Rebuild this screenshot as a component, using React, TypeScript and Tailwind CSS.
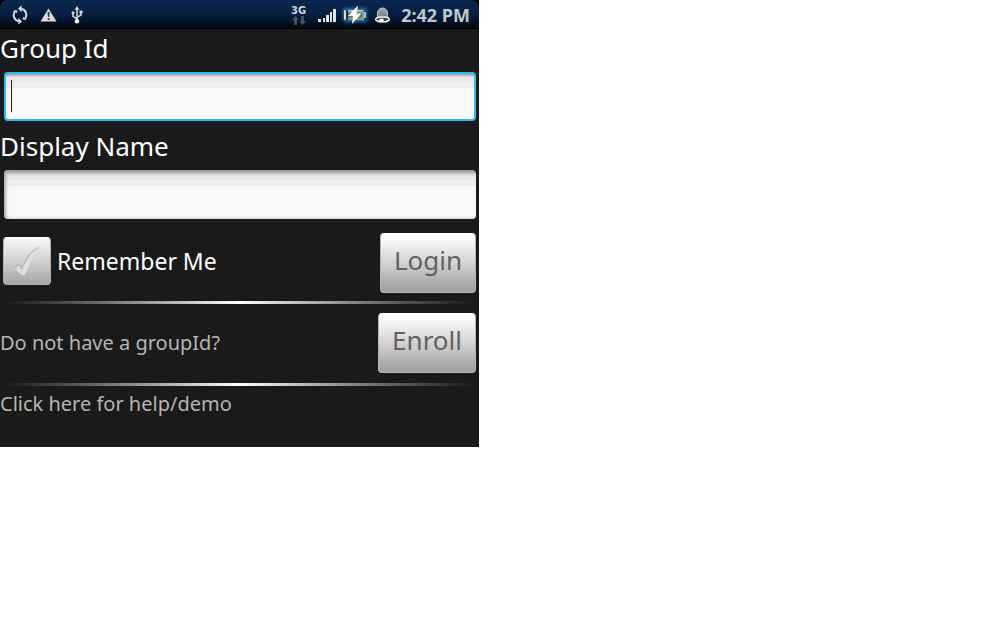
import type { ReactNode } from "react";

function SyncIcon() {
  return (
    <svg width="16" height="20" viewBox="0 0 16 20" fill="none" aria-hidden="true">
      <path d="M6.5 16.2A6.3 6.3 0 0 1 3.2 6" stroke="#d6d8da" strokeWidth="2" />
      <path d="M9.5 3.8A6.3 6.3 0 0 1 12.8 14" stroke="#d6d8da" strokeWidth="2" />
      <path d="M6 3.6 9.6 .6V7z" fill="#e6e7e8" />
      <path d="M10 16.400 6.400 13v6.600z" fill="#e6e7e8" />
      <path d="M1.500 5.200h3.700v3z" fill="#d6d8da" />
      <path d="M14.500 14.800h-3.700v-3z" fill="#d6d8da" />
    </svg>
  );
}

function WarningIcon() {
  return (
    <svg width="17" height="14" viewBox="0 0 17 14" aria-hidden="true">
      <path d="M8.5 .5 16.5 13.5H.5z" fill="#d9dbdc" />
      <path d="M7.6 4h2l-.4 5H8z" fill="#26303d" />
      <rect x="7.6" y="10.2" width="2" height="1.8" fill="#26303d" />
    </svg>
  );
}

function UsbIcon() {
  return (
    <svg width="12" height="18" viewBox="0 0 12 18" fill="none" aria-hidden="true">
      <path d="M6 15V3M6 13 2 10.4V7M6 11.4 10 9V6.5" stroke="#d0d3d6" strokeWidth="1.6" />
      <path d="M6 0 8.4 3.8H3.6z" fill="#d9dbdc" />
      <circle cx="2" cy="6.8" r="1.6" fill="#d0d3d6" />
      <rect x="8.5" y="4.5" width="3" height="3" fill="#d0d3d6" />
      <circle cx="6" cy="15.2" r="2.3" fill="#f0f1f2" />
    </svg>
  );
}

function DataArrows() {
  return (
    <svg width="14" height="9" viewBox="0 0 14 9" fill="#46525f" aria-hidden="true">
      <path d="M3.5 0 7 4H5v5H2V4H0z" />
      <path d="M10.500 9 14 5h-2V0H9v5H7z" />
    </svg>
  );
}

function SignalIcon() {
  return (
    <svg width="18" height="13" viewBox="0 0 18 13" fill="#dfe2e4" aria-hidden="true">
      <rect x="0" y="10" width="3" height="3" />
      <rect x="5" y="9" width="2" height="4" />
      <rect x="8" y="6" width="3" height="7" />
      <rect x="12" y="3" width="2" height="10" />
      <rect x="15" y="0" width="3" height="13" />
    </svg>
  );
}

function BatteryIcon() {
  return (
    <svg width="30" height="22" viewBox="0 0 30 22" aria-hidden="true">
      <defs>
        <filter id="glow" x="-30%" y="-40%" width="160%" height="180%">
          <feGaussianBlur stdDeviation="1.5" />
        </filter>
        <linearGradient id="cell" x1="0" x2="0" y1="0" y2="1">
          <stop offset="0" stopColor="#d9e2e4" />
          <stop offset=".4" stopColor="#3f5558" />
          <stop offset="1" stopColor="#93a6a4" />
        </linearGradient>
      </defs>
      <rect x="3" y="4" width="24" height="14" rx="3" fill="#2472aa" filter="url(#glow)" />
      <rect x="4" y="6" width="22" height="10" rx="2" fill="#14324c" />
      <rect x="4" y="6" width="2" height="10" rx="1" fill="#d4dadb" />
      <rect x="8" y="6" width="14" height="10" fill="url(#cell)" />
      <rect x="22" y="6" width="2" height="10" fill="#8f9f80" />
      <rect x="24" y="8" width="2" height="6" fill="#a9bcc4" />
      <path d="M18 1.500 8 12h5L12 20 21.500 9.500h-5z" fill="#fff" />
    </svg>
  );
}

function BellIcon() {
  return (
    <svg width="17" height="16" viewBox="0 0 17 16" aria-hidden="true">
      <defs>
        <linearGradient id="bell" x1="0" x2="0" y1="0" y2="1">
          <stop offset="0" stopColor="#a2a9b2" />
          <stop offset="1" stopColor="#66727f" />
        </linearGradient>
      </defs>
      <path d="M3.500 11V6a5 5 0 0 1 10 0v5l2 1.500h-14z" fill="url(#bell)" stroke="#c4c9ce" />
      <path d="M2.500 11C5 9.500 12 9.500 14.500 11c2.500 2-1 4-6 4s-8.500-2-6-4z" fill="#27364a" stroke="#f4f5f6" strokeWidth="1.500" />
      <ellipse cx="7.500" cy="13" rx="2.500" ry="1.500" fill="#fff" />
    </svg>
  );
}

function StatusBar() {
  return (
    <header className="bg-black pb-px">
      <div className="flex h-7 items-center rounded-t-lg bg-linear-to-b from-[#0a2650] via-[#071f42] to-[#020912] pt-px pr-[9px] pl-3">
        <div className="flex items-center gap-3">
          <SyncIcon />
          <WarningIcon />
          <span className="pl-0.5">
            <UsbIcon />
          </span>
        </div>
        <div className="ml-auto flex items-center">
          <div className="mr-3 flex flex-col items-center">
            <span className="font-['DejaVu_Sans',sans-serif] text-[10px] leading-[11px] font-bold text-[#d2d5d8]">3G</span>
            <DataArrows />
          </div>
          <span className="mr-1 pt-0.5">
            <SignalIcon />
          </span>
          <BatteryIcon />
          <span className="mr-2.5 ml-1">
            <BellIcon />
          </span>
          <time className="text-[18px] leading-7 font-bold text-[#bfc8cc]">2:42 PM</time>
        </div>
      </div>
    </header>
  );
}

function Divider() {
  return (
    <hr className="mx-1 h-[3px] border-0 bg-linear-to-r from-[#1a1a1a] via-white to-[#1a1a1a]" />
  );
}

function GlossButton({ children, type }: { children: ReactNode; type: "submit" | "button" }) {
  return (
    <button
      type={type}
      className="mr-[3px] h-[60px] rounded-[4px] border border-[#b5b5b5] border-t-white bg-linear-to-b from-[#fafafa] from-10% via-[#cfcccd] via-55% to-[#a5a5a5] to-90% px-[13px] pb-1.5 text-[26px] leading-8 text-[#62625f]"
    >
      {children}
    </button>
  );
}

export default function App() {
  return (
    <main className="w-full max-w-[479px] bg-[#1a1a1a] font-['Noto_Sans',sans-serif] text-white">
      <StatusBar />
      <form className="pb-[29px]" onSubmit={(e) => e.preventDefault()}>
        <label htmlFor="group" className="block pt-px text-[26px] leading-9">
          Group Id
        </label>
        <div className="relative mt-1.5 mr-[3px] ml-1">
          <input
            id="group"
            className="block h-[49px] w-full rounded-[4px] border-2 border-[#2dbcf0] bg-[linear-gradient(#a9a9a9_0px,#a9a9a9_1px,#cfcfcf_2px,#e6e6e6_3px,#e6e6e6_8px,#eeeeee_8px,#eeeeee_14px,#f8f8f8_14px)] px-2 text-2xl text-black outline-none"
          />
          <span className="absolute top-2 left-[7px] h-8 w-px bg-[#222]" aria-hidden="true" />
        </div>
        <label htmlFor="display" className="block pt-[7px] text-[26px] leading-9">
          Display Name
        </label>
        <div className="mt-1.5 mr-[3px] ml-1">
          <input
            id="display"
            className="block h-[49px] w-full rounded-[4px] bg-[linear-gradient(#929292_0px,#a9a9a9_2px,#d4d4d4_4px,#e6e6e6_6px,#e6e6e6_10px,#eeeeee_10px,#eeeeee_16px,#f8f8f8_16px)] px-2 text-2xl text-black inset-shadow-[2px_0_3px_#aaaaaa] outline-none"
          />
        </div>
        <div className="flex items-start justify-between pt-[14px] pb-2">
          <label className="flex items-center gap-1.5 pt-1 pl-[3px] text-[23px] leading-8">
            <span className="relative block">
              <input
                type="checkbox"
                className="block size-12 appearance-none rounded-[4px] border border-[#b2b2b0] border-t-white bg-linear-to-b from-[#f8f8f8] via-[#d0d0ce] to-[#a6a6a4]"
              />
              <svg className="pointer-events-none absolute inset-0" width="48" height="48" viewBox="0 0 48 48" aria-hidden="true">
                <path d="M11 29.500 16 27l3 4C23 20 28 12 37 10c-7 7-11 15-15 26-2 1-4 1-5 0z" fill="#b4b4b2" />
                <path d="M11.500 31 16 28.500l3 4.500C24 21 29 13 37.500 10.500c-7 8-11 16-15 26.500-2 1.500-4 1.500-5 0z" fill="#dededc" />
              </svg>
            </span>
            Remember Me
          </label>
          <GlossButton type="submit">Login</GlossButton>
        </div>
        <Divider />
        <div className="flex items-center justify-between pt-[9px] pb-[10px]">
          <p className="text-[20px] leading-7 text-[#b5b5b3]">Do not have a groupId?</p>
          <GlossButton type="button">Enroll</GlossButton>
        </div>
        <Divider />
        <a href="#help" className="mt-1 block text-[20px] leading-7 text-[#b5b5b3]">
          Click here for help/demo
        </a>
      </form>
    </main>
  );
}
